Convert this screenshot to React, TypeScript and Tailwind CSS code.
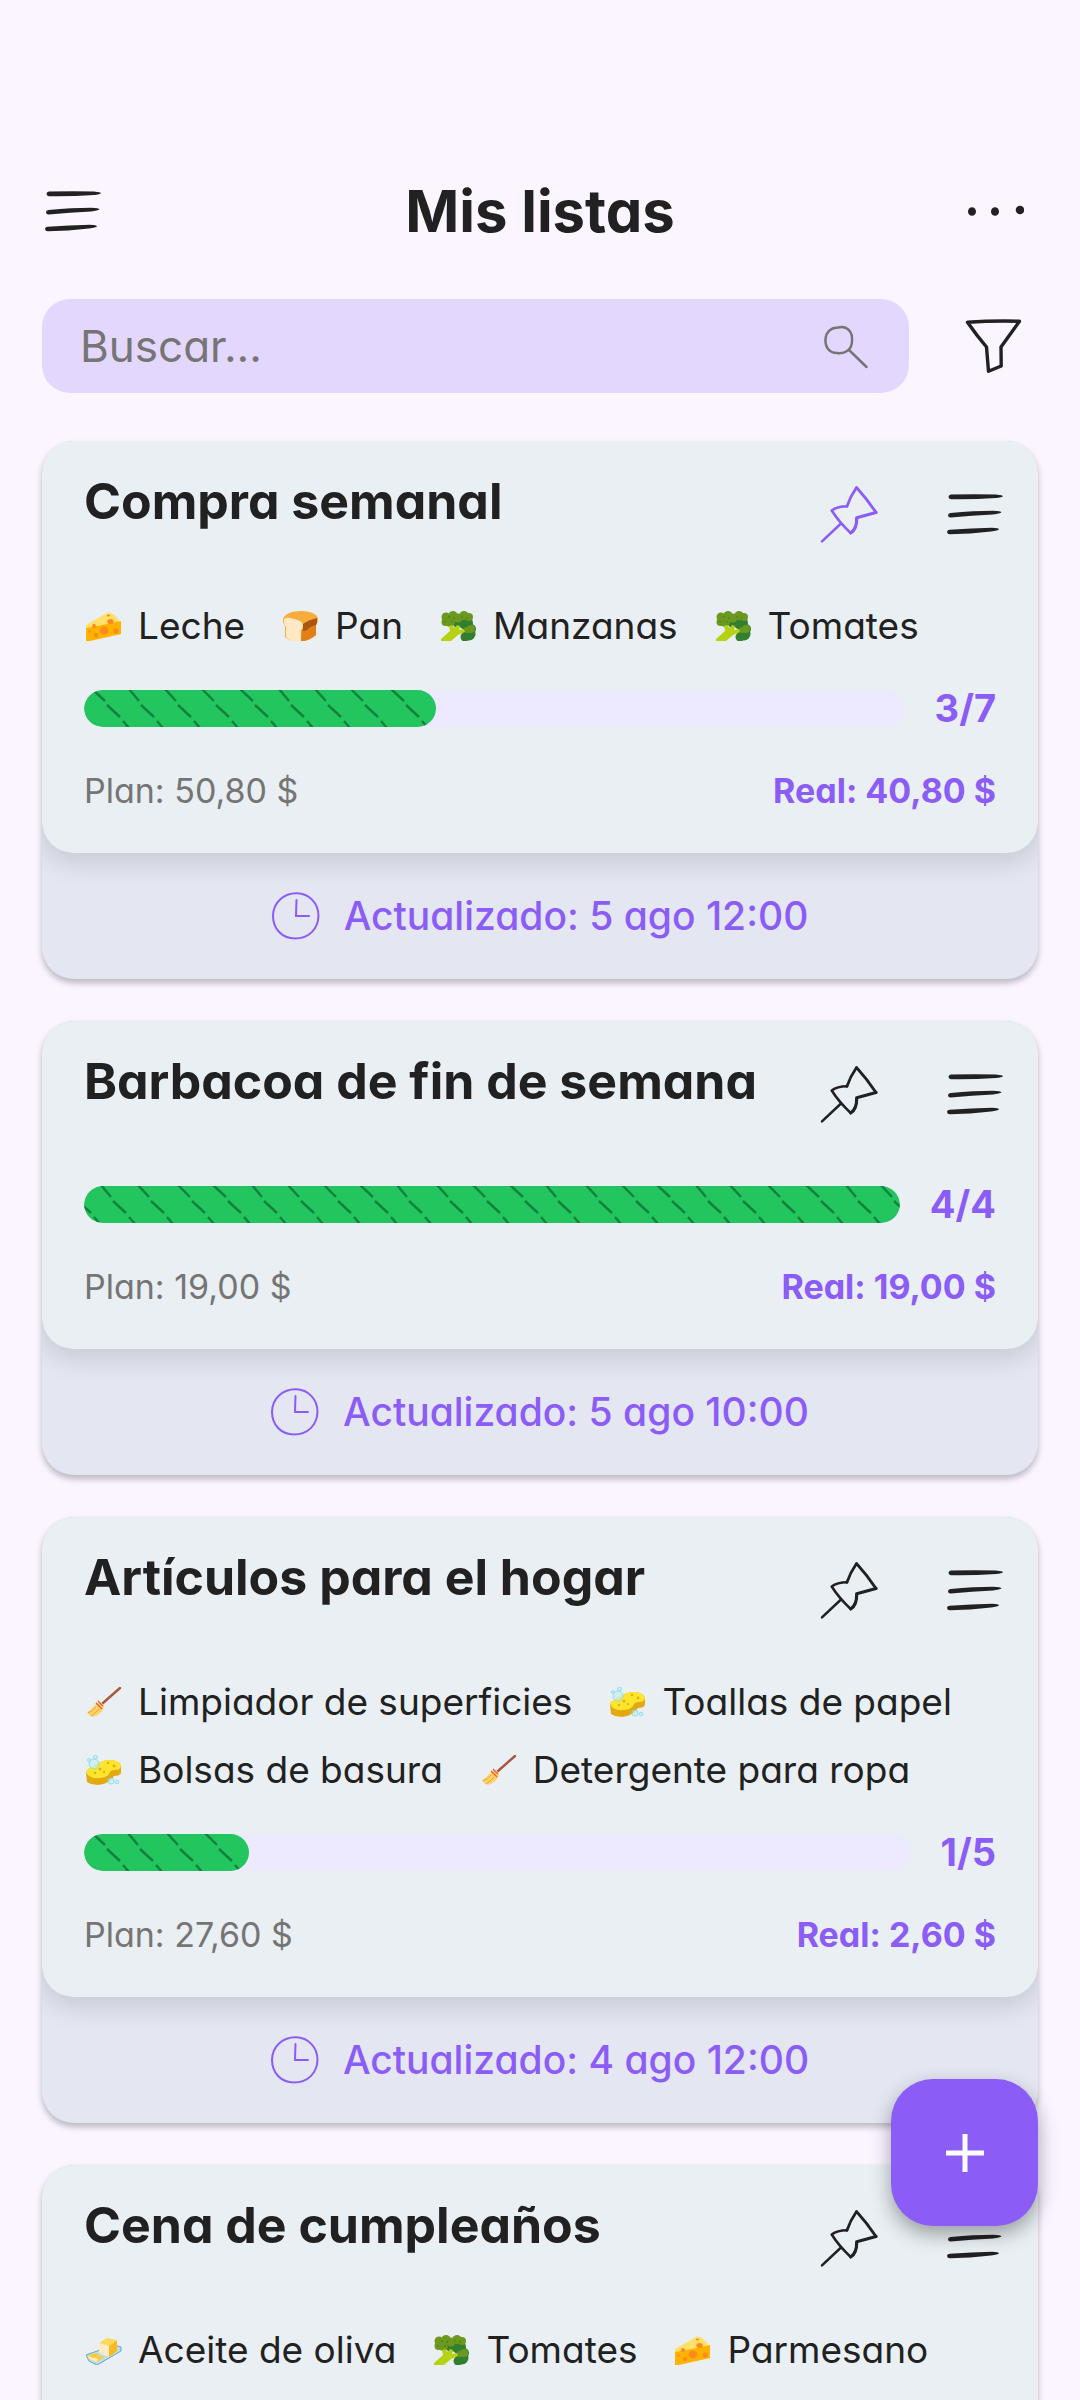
import { useState, type ReactNode } from "react";

type Product = { emoji: EmojiName; name: string };

type ShoppingList = {
  title: string;
  pinned?: boolean;
  products: Product[];
  done: number;
  total: number;
  plan: string;
  real: string;
  updated: string;
  strokes: number[];
};

const LISTS: ShoppingList[] = [
  {
    title: "Compra semanal",
    pinned: true,
    products: [
      { emoji: "cheese", name: "Leche" },
      { emoji: "bread", name: "Pan" },
      { emoji: "broccoli", name: "Manzanas" },
      { emoji: "broccoli", name: "Tomates" },
    ],
    done: 3,
    total: 7,
    plan: "50,80 $",
    real: "40,80 $",
    updated: "5 ago 12:00",
    strokes: [8, 45, 81, 118, 156, 195, 231, 267, 307],
  },
  {
    title: "Barbacoa de fin de semana",
    products: [],
    done: 4,
    total: 4,
    plan: "19,00 $",
    real: "19,00 $",
    updated: "5 ago 10:00",
    strokes: [-21, 17, 54, 94, 129, 168, 204, 240, 276, 313, 353, 389, 426, 462, 502, 538, 573, 612, 646, 684, 722, 762, 797],
  },
  {
    title: "Artículos para el hogar",
    products: [
      { emoji: "broom", name: "Limpiador de superficies" },
      { emoji: "sponge", name: "Toallas de papel" },
      { emoji: "sponge", name: "Bolsas de basura" },
      { emoji: "broom", name: "Detergente para ropa" },
    ],
    done: 1,
    total: 5,
    plan: "27,60 $",
    real: "2,60 $",
    updated: "4 ago 12:00",
    strokes: [8, 44, 83, 121],
  },
  {
    title: "Cena de cumpleaños",
    products: [
      { emoji: "butter", name: "Aceite de oliva" },
      { emoji: "broccoli", name: "Tomates" },
      { emoji: "cheese", name: "Parmesano" },
    ],
    done: 2,
    total: 6,
    plan: "42,00 $",
    real: "18,50 $",
    updated: "3 ago 18:00",
    strokes: [8, 45, 82, 119, 156, 193, 230],
  },
];

const EMOJI = {
  cheese: (
    <>
      <path d="M0 14 21 2q3-1.500 6 1 5 4 8 9L0 19Z" fill="#ffe06b" />
      <path d="M0 17q18-3 35-7v13L4 30H0Z" fill="#ffb300" />
      <g fill="#ff8a1c">
        <ellipse cx="18" cy="19.500" rx="4.300" ry="4" />
        <ellipse cx="24.500" cy="10.500" rx="3.200" ry="2.600" />
        <circle cx="30" cy="20" r="2.600" />
        <circle cx="10" cy="24" r="2.200" />
        <circle cx="8" cy="15" r="2" />
        <circle cx="3.500" cy="20.500" r="1.300" />
        <ellipse cx="22.500" cy="4.500" rx="1.700" ry="1.100" />
      </g>
    </>
  ),
  bread: (
    <>
      <path d="M0 8Q3 0 18 0q14 0 17 7 0 4-2 6v11q-6 5-12 6H8l-6-4V15Q0 13 0 8Z" fill="#f6ad3c" />
      <path d="M19 14q6-4 15-6v5l-1 1v10q-6 5-12 6h-3Z" fill="#e27f16" />
      <path d="M20 13q5-4 14-6 1 4-1 7-4 1-7 3-2 3-6 3Z" fill="#ad560f" />
      <path d="M1 10q0-4 6-3l8 2q5 2 5 6 0 3-2 4v11H8l-5-4V16q-2-2-2-6Z" fill="#ffe8c6" />
    </>
  ),
  broccoli: (
    <>
      <g fill="#32802f">
        <circle cx="28" cy="23" r="6.500" />
        <circle cx="25" cy="12" r="7" />
        <circle cx="30" cy="18" r="5" />
        <circle cx="24" cy="26" r="4.500" />
        <circle cx="17" cy="12" r="5" />
      </g>
      <g fill="#6c981f">
        <circle cx="5" cy="6" r="4.500" />
        <circle cx="4.500" cy="11" r="4" />
        <circle cx="12" cy="4.500" r="4.500" />
        <circle cx="9" cy="11" r="5" />
        <circle cx="17" cy="7" r="4.500" />
        <circle cx="23" cy="4.500" r="4.500" />
        <circle cx="28" cy="6" r="4" />
        <circle cx="30" cy="18" r="4" />
        <circle cx="26" cy="19" r="3" />
      </g>
      <path d="M0 30v-2l9-8-1-5 3-1 3 3 2-3 3 1-1 4 5-1 1 3-7 3-7 6Z" fill="#b7d214" />
      <g fill="#32802f">
        <circle cx="8" cy="6" r="0.800" />
        <circle cx="13" cy="7" r="0.800" />
        <circle cx="11" cy="11" r="0.800" />
        <circle cx="21" cy="6" r="0.800" />
        <circle cx="26" cy="7" r="0.800" />
        <circle cx="4" cy="11" r="0.800" />
      </g>
    </>
  ),
  broom: (
    <>
      <path d="M17 16 34 1" stroke="#a9583f" strokeWidth="2.400" strokeLinecap="round" />
      <path d="M13 15q4 0 5 5-2 6-8 9-6 2-9-4 4-2 7-6Z" fill="#ffd36a" />
      <path d="M2 26q5-2 8-6M5 29q5-3 8-7" stroke="#e2a63b" strokeWidth="1" fill="none" />
      <path d="m10 16 6 6M12 14l5 5" stroke="#ef5a3c" strokeWidth="1.300" />
    </>
  ),
  sponge: (
    <>
      <path d="M0 18q0-4 8-7 8-6 15-6 9 0 12 5v8q-1 3-7 3-5 8-16 9l-7-1-4-2Z" fill="#e3a912" />
      <path d="M0 17q0-3 8-6 8-6 15-6 9 0 12 5 0 5-6 5-5 0-6 4-3 4-10 4-10 1-13-6Z" fill="#ffe52e" />
      <g fill="#e0b40c">
        <circle cx="14" cy="14" r="1.600" />
        <circle cx="22" cy="8" r="1.300" />
        <circle cx="28" cy="11" r="1.400" />
        <circle cx="9" cy="18" r="1.300" />
        <circle cx="18" cy="17" r="1.200" />
        <circle cx="6" cy="25" r="1.200" />
        <circle cx="20" cy="25" r="1.200" />
      </g>
      <g fill="#bdeef5" fillOpacity="0.600" stroke="#7fdbe8" strokeWidth="0.800">
        <circle cx="8" cy="9" r="5" />
        <circle cx="9.500" cy="2" r="2" />
        <circle cx="3" cy="5" r="1.500" />
        <circle cx="25" cy="26" r="3" />
        <circle cx="31" cy="27" r="1.800" />
      </g>
    </>
  ),
  butter: (
    <>
      <path d="m0 20 3 6 8 4 24-14v-4l-7-2Z" fill="#b9dfe8" stroke="#6ba7b8" strokeWidth="1" />
      <path d="m13 8 10 3v11l-10-4Z" fill="#ffecc4" />
      <path d="m23 11 8-6v11l-8 6Z" fill="#ffb81f" />
      <path d="m13 8 8-5 10 2-8 6Z" fill="#ffd95c" />
      <path d="m2 21 6-3 10 4-7 5-9-3Z" fill="#ffc93c" />
      <path d="m2 21 10 3-1 3-8-3Z" fill="#ffecc4" />
    </>
  ),
};

type EmojiName = keyof typeof EMOJI;

function Emoji({ name }: { name: EmojiName }) {
  return (
    <svg viewBox="0 0 36 30" className="h-[30px] w-9 shrink-0" fill="none" aria-hidden="true">
      {EMOJI[name]}
    </svg>
  );
}

function Icon({ children, className = "size-[58px]" }: { children: ReactNode; className?: string }) {
  return (
    <svg viewBox="0 0 58 58" className={className} fill="none" stroke="currentColor" strokeLinecap="round" strokeLinejoin="round" aria-hidden="true">
      {children}
    </svg>
  );
}

function MenuIcon() {
  return (
    <Icon>
      <g fill="currentColor" stroke="none">
        <path d="M5 9.500Q30 8.800 50 9.500 57 10.300 57 11.300 56 12.500 50 13 28 14.500 5 14.200 2.500 14 2.500 11.800 2.700 9.800 5 9.500Z" />
        <path d="M4.500 28Q28 25.800 47 25.800 55 26 55.500 27.300 54 28.800 47 29.500 26 30.500 5 32.500 2.200 32.800 2 30.300 2 28.200 4.500 28Z" />
        <path d="M3.500 44.800Q26 43.200 46 42.700 53 43 53 44.300 52 45.800 45 46.500 24 49 4 49.200 1.300 49.300 1 47 1 45 3.500 44.800Z" />
      </g>
    </Icon>
  );
}

function DotsIcon() {
  return (
    <Icon>
      <g fill="currentColor" stroke="none">
        <ellipse cx="6" cy="29.500" rx="4" ry="4.300" />
        <ellipse cx="29" cy="29.500" rx="4" ry="4.300" />
        <ellipse cx="54" cy="28" rx="4.300" ry="4.200" />
      </g>
    </Icon>
  );
}

function PinIcon() {
  return (
    <Icon>
      <path d="M27 21.300Q30 12 36.500 2.500 47 14 56 27.500" strokeWidth="2.800" />
      <path d="M56 27.500 36.700 32.700Q37 44 30.700 48" strokeWidth="3.200" />
      <path d="M30.700 48Q19 37 11.700 25.500 17 21.500 27 21.300M21 38.500 2 56.300" strokeWidth="2.500" />
    </Icon>
  );
}

function FilterIcon() {
  return (
    <Icon>
      <path d="M3.500 5.300Q30 3.500 55.500 4.300L37 30 37.200 49 24.500 54.300 22.500 30Q13 19 3.500 5.300Z" strokeWidth="3.400" />
    </Icon>
  );
}

function SearchIcon() {
  return (
    <Icon className="size-[58px] shrink-0 text-[#757575]">
      <path d="M21 10.500C30 8 36 15 35 24 35 33 28 37 20 36 12 36 8 30 8.500 22 9 15 14 10.500 21 10.500Z" strokeWidth="2.500" />
      <path d="M32 33 49.500 50" strokeWidth="2.500" />
    </Icon>
  );
}

function ClockIcon() {
  return (
    <svg viewBox="0 0 48 48" className="size-12" fill="none" stroke="currentColor" strokeWidth="2" strokeLinecap="round" aria-hidden="true">
      <path d="M25 1.300C37 1.500 46.500 11 46.500 24 46 37 37 46.500 23 46.500 10 46.500 1 37 1 23.500 1.500 10 12 1 25 1.300Z" />
      <path d="M24.500 8 24 24H37" />
    </svg>
  );
}

// Three dashes per stroke, bent a little so that the hatching looks hand drawn.
function Hatching({ strokes }: { strokes: number[] }) {
  return (
    <svg className="block h-full w-full" fill="none" stroke="#15803d" strokeWidth="2.400" aria-hidden="true">
      {strokes.map((x, i) => {
        const bend = (i * 7) % 4;
        return (
          <path key={x} d={`M${x} -1 L${x + 13 - bend} 11 M${x + 15 - bend} 15 L${x + 28 - bend} 27 M${x + 31 - bend} 31 L${x + 37 - bend} 38`} />
        );
      })}
    </svg>
  );
}

function ListCard({ list }: { list: ShoppingList }) {
  const [pinned, setPinned] = useState(Boolean(list.pinned));

  return (
    <article className="overflow-hidden rounded-[32px] bg-[#e4e6f2] shadow-[0_4px_6px_rgba(0,0,0,0.25)]">
      <div className="rounded-[32px] bg-[#e9eff3] shadow-[0_8px_28px_rgba(0,0,0,0.14)]">
        <header className="flex items-start pt-[30px] pr-[34px] pb-[49px] pl-[42px]">
          <h2 className="min-w-0 flex-1 truncate text-[50px] leading-[60px] font-bold">{list.title}</h2>
          <div className="flex gap-[68px] pt-[14px]">
            <button type="button" aria-label="Fijar lista" aria-pressed={pinned} onClick={() => setPinned(!pinned)} className={pinned ? "text-[#8b5cf6]" : "text-[#212121]"}>
              <PinIcon />
            </button>
            <button type="button" aria-label="Opciones de la lista">
              <MenuIcon />
            </button>
          </div>
        </header>

        {list.products.length > 0 && (
          <ul className="flex flex-wrap gap-x-[38px] px-11 pb-4 text-[37px] leading-[68px]">
            {list.products.map((product) => (
              <li key={product.name} className="flex items-center gap-4">
                <Emoji name={product.emoji} />
                {product.name}
              </li>
            ))}
          </ul>
        )}

        <div className="flex items-center gap-[30px] px-[42px] pt-[14px]">
          <div role="progressbar" aria-label={list.title} aria-valuenow={list.done} aria-valuemax={list.total} className="h-[37px] flex-1 overflow-hidden rounded-full bg-[#ede9fe]">
            <div className="h-full overflow-hidden rounded-full bg-[#22c55e]" style={{ width: `${(list.done / list.total) * 100}%` }}>
              <Hatching strokes={list.strokes} />
            </div>
          </div>
          <span className="text-[38px] leading-[37px] font-bold text-[#8b5cf6]">
            {list.done}/{list.total}
          </span>
        </div>

        <div className="flex justify-between px-[42px] pt-10 pb-[38px] text-[34px] leading-[48px]">
          <p className="text-[#757575]">Plan: {list.plan}</p>
          <p className="font-bold text-[#8b5cf6]">Real: {list.real}</p>
        </div>
      </div>

      <footer className="flex h-[126px] items-center justify-center gap-6 text-[39px] font-medium text-[#8b5cf6]">
        <ClockIcon />
        <p>Actualizado: {list.updated}</p>
      </footer>
    </article>
  );
}

export default function App() {
  const [query, setQuery] = useState("");
  const visible = LISTS.filter((list) => list.title.toLowerCase().includes(query.toLowerCase()));

  return (
    <div className="h-screen overflow-y-auto bg-[#faf5ff] font-['Inter',sans-serif] text-[#212121] [font-feature-settings:'cv11'] [scrollbar-width:none]">
      <header className="flex items-center justify-between px-[44px] pt-[171px]">
        <button type="button" aria-label="Menú" className="w-[70px]">
          <MenuIcon />
        </button>
        <h1 className="text-[58px] leading-[80px] font-bold">Mis listas</h1>
        <button type="button" aria-label="Más opciones" className="w-[70px]">
          <DotsIcon />
        </button>
      </header>

      <form role="search" className="flex items-center gap-[55px] pt-12 pr-[58px] pl-[42px]" onSubmit={(event) => event.preventDefault()}>
        <label className="flex h-[94px] min-w-0 flex-1 items-center rounded-[28px] bg-[#e4d7fe] pr-[34px] pl-[38px]">
          <input
            type="text"
            aria-label="Buscar"
            placeholder="Buscar..."
            value={query}
            onChange={(event) => setQuery(event.target.value)}
            className="min-w-0 flex-1 bg-transparent text-[44px] outline-none placeholder:text-[#757575]"
          />
          <SearchIcon />
        </label>
        <button type="button" aria-label="Filtrar">
          <FilterIcon />
        </button>
      </form>

      <main className="flex flex-col gap-[42px] px-[42px] pt-12 pb-[42px]">
        {visible.map((list) => (
          <ListCard key={list.title} list={list} />
        ))}
      </main>

      <button type="button" aria-label="Nueva lista" className="fixed right-[42px] bottom-[174px] grid size-[147px] place-items-center rounded-[42px] bg-[#8b5cf6] text-white shadow-[0_8px_20px_rgba(0,0,0,0.35)]">
        <svg viewBox="0 0 38 38" className="size-[38px]" stroke="currentColor" strokeWidth="5" aria-hidden="true">
          <path d="M19 0v38M0 19h38" />
        </svg>
      </button>
    </div>
  );
}
